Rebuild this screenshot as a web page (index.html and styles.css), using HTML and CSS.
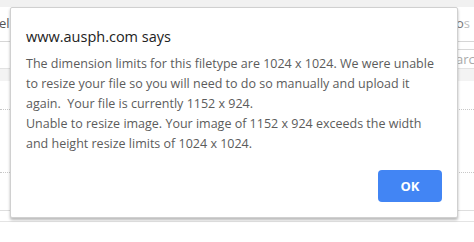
FILE: index.html
```
<!DOCTYPE html>
<html>
<head>
<meta charset="utf-8">
<link rel="stylesheet" href="styles.css">
</head>
<body>
<div class="page">
  <div class="topstrip"></div>
  <div class="header">
    <span class="hleft">el</span>
    <span class="hright">to<span class="fade">s</span></span>
  </div>
  <div class="searchrow">
    <div class="search"><span class="ph">arch</span></div>
  </div>
  <div class="band"></div>
  <div class="row r1"></div>
  <div class="row r2"></div>
  <div class="row r3"></div>
  <div class="row r4"></div>
</div>

<div class="dialog">
  <div class="title">www.ausph.com says</div>
  <div class="message">The dimension limits for this filetype are 1024 x 1024. We were unable
to resize your file so you will need to do so manually and upload it
again.  Your file is currently 1152 x 924.
Unable to resize image. Your image of 1152 x 924 exceeds the width
and height resize limits of 1024 x 1024.</div>
  <div class="actions">
    <button class="ok">OK</button>
  </div>
</div>
</body>
</html>
```
FILE: styles.css
```
html, body {
  margin: 0;
  padding: 0;
  background: #ffffff;
  overflow: hidden;
  width: 474px;
  height: 242px;
  font-family: "Open Sans", "Noto Sans", sans-serif;
}

.page {
  display: flex;
  flex-direction: column;
  width: 474px;
}

.topstrip {
  height: 7px;
  background: #f1f1f1;
}

.header {
  height: 34px;
  border-bottom: 1px solid #d6d6d6;
  display: flex;
  justify-content: space-between;
  align-items: center;
  font-size: 13px;
  color: #555;
}

.hleft {
  margin-left: -1px;
  margin-top: -2px;
}

.hright {
  margin-right: 4px;
  margin-top: -2px;
  color: #777;
}

.fade {
  color: #bbb;
}

.searchrow {
  height: 26px;
  display: flex;
  justify-content: flex-end;
  align-items: flex-end;
  overflow: hidden;
}

.search {
  width: 160px;
  height: 18px;
  border: 1px solid #d8d8d8;
  border-bottom: none;
  margin-right: -20px;
  display: flex;
  align-items: center;
  justify-content: flex-end;
  padding-right: 0;
  box-sizing: content-box;
}

.ph {
  font-size: 13px;
  color: #aaa;
  width: 37px;
  text-align: left;
}

.band {
  height: 12px;
  background: #f3f3f3;
  border-top: 1px solid #e2e2e2;
}

.row {
  box-sizing: border-box;
}

.r1 {
  height: 29px;
  border-bottom: 1px dotted #c8c8c8;
}

.r2 {
  height: 63px;
  border-bottom: 1px dotted #c8c8c8;
}

.r3 {
  height: 38px;
  border-bottom: 1px solid #dedede;
}

.r4 {
  height: 11px;
  border-bottom: 1px solid #e4e4e4;
}

.dialog {
  position: absolute;
  left: 10px;
  top: 7px;
  width: 448px;
  height: 211px;
  box-sizing: border-box;
  background: #ffffff;
  border: 1px solid #d0d0d0;
  border-radius: 2px;
  box-shadow: 0 2px 3px rgba(0, 0, 0, 0.28);
  padding: 19px 15px 15px 15px;
  display: flex;
  flex-direction: column;
}

.title {
  font-size: 14.5px;
  line-height: 20px;
  color: #222;
  margin-bottom: 7px;
}

.message {
  font-size: 12.5px;
  line-height: 20px;
  color: #5c5c5c;
  white-space: pre;
}

.actions {
  display: flex;
  justify-content: flex-end;
  margin-top: 16px;
}

.ok {
  width: 64px;
  height: 32px;
  border: none;
  border-radius: 4px;
  background: #4285f4;
  color: #ffffff;
  font-family: "Open Sans", "Noto Sans", sans-serif;
  font-weight: 700;
  font-size: 13px;
  padding: 0;
}
```
